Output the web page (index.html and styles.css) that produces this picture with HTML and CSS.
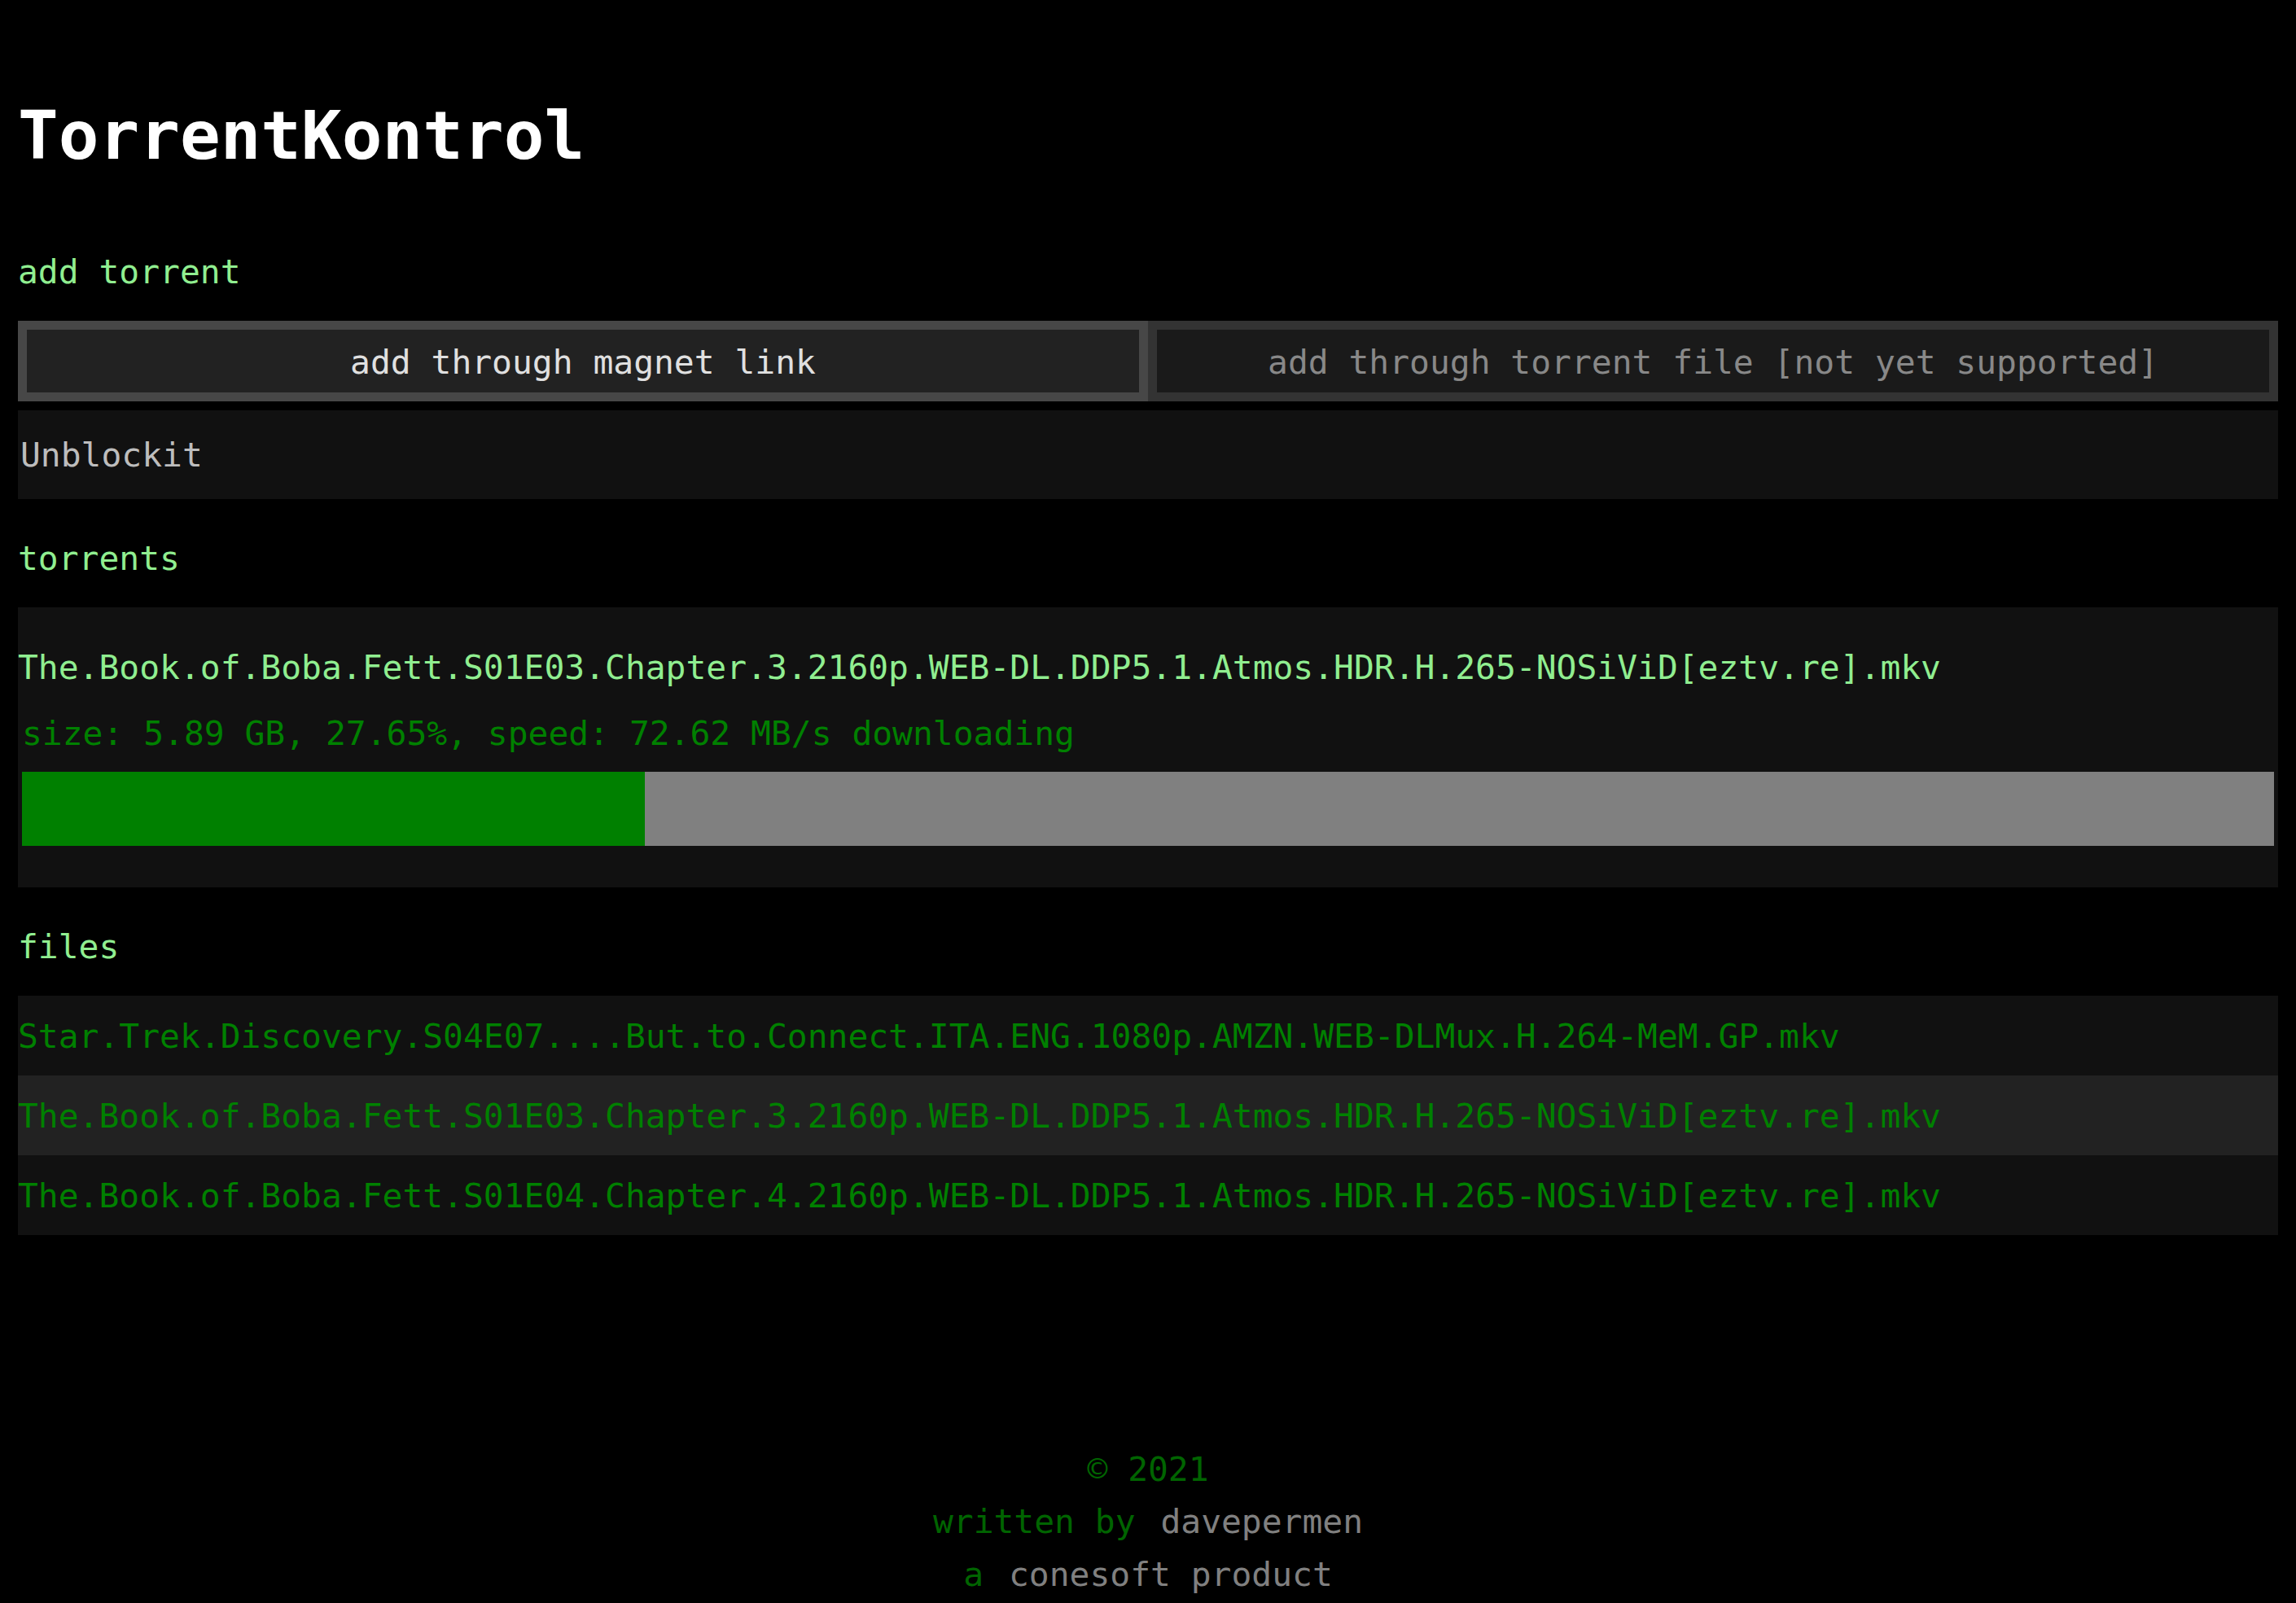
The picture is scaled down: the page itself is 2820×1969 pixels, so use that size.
FILE: index.html
```html
<!DOCTYPE html>
<html lang="en">
<head>
<meta charset="utf-8">
<title>TorrentKontrol</title>
<link rel="stylesheet" href="styles.css">
</head>
<body>
  <h1 class="title">TorrentKontrol</h1>

  <h2 class="label label-first">add torrent</h2>
  <div class="tabs">
    <button class="tab tab-active">add through magnet link</button>
    <button class="tab tab-inactive">add through torrent file [not yet supported]</button>
  </div>
  <div class="site-box">Unblockit</div>

  <h2 class="label">torrents</h2>
  <div class="torrent">
    <div class="torrent-name">The.Book.of.Boba.Fett.S01E03.Chapter.3.2160p.WEB-DL.DDP5.1.Atmos.HDR.H.265-NOSiViD[eztv.re].mkv</div>
    <div class="torrent-status">size: 5.89 GB, 27.65%, speed: 72.62 MB/s downloading</div>
    <div class="progress"><div class="progress-fill" style="width: 27.65%"></div></div>
  </div>

  <h2 class="label">files</h2>
  <ul class="files">
    <li class="file">Star.Trek.Discovery.S04E07....But.to.Connect.ITA.ENG.1080p.AMZN.WEB-DLMux.H.264-MeM.GP.mkv</li>
    <li class="file">The.Book.of.Boba.Fett.S01E03.Chapter.3.2160p.WEB-DL.DDP5.1.Atmos.HDR.H.265-NOSiViD[eztv.re].mkv</li>
    <li class="file">The.Book.of.Boba.Fett.S01E04.Chapter.4.2160p.WEB-DL.DDP5.1.Atmos.HDR.H.265-NOSiViD[eztv.re].mkv</li>
  </ul>

  <footer class="footer">
    <div class="footer-line">© 2021</div>
    <div class="footer-line">written by <a class="footer-link" href="#">davepermen</a></div>
    <div class="footer-line">a <a class="footer-link" href="#">conesoft product</a></div>
  </footer>
</body>
</html>
```
FILE: styles.css
```css
html, body {
  margin: 0;
  padding: 0;
  background: #000;
}

body {
  box-sizing: border-box;
  min-height: 100vh;
  padding: 0 22px;
  display: flex;
  flex-direction: column;
  font-family: "DejaVu Sans Mono", "Liberation Mono", monospace;
  font-size: 41.3px;
  color: #fff;
}

.title {
  margin: 116px 0 0;
  font-size: 82.6px;
  line-height: 100px;
  font-weight: bold;
  color: #fff;
}

.label {
  margin: 43px 0 30px;
  font-size: inherit;
  font-weight: normal;
  line-height: 60px;
  color: #90ee90;
}

.label-first {
  margin-top: 88px;
}

.tabs {
  display: flex;
}

.tab {
  flex: 1 1 0;
  margin: 0;
  padding: 3px 0 0;
  height: 99px;
  box-sizing: border-box;
  border: 11px solid #474747;
  background: #222;
  color: #e0e0e0;
  font: inherit;
  line-height: 74px;
  text-align: center;
  white-space: nowrap;
  -webkit-appearance: none;
  appearance: none;
  border-radius: 0;
}

.tab-inactive {
  border-color: #333;
  background: #1a1a1a;
  color: #888;
}

.site-box {
  margin-top: 11px;
  height: 109px;
  box-sizing: border-box;
  padding: 2px 0 0 3px;
  line-height: 107px;
  background: #111;
  color: #bdbdbd;
}

.torrent {
  background: #111;
  padding: 44px 5px 51px 0;
}

.torrent-name {
  line-height: 60px;
  color: #90ee90;
  white-space: nowrap;
}

.torrent-status {
  margin-top: 21px;
  padding-left: 5px;
  line-height: 60px;
  color: #008000;
  white-space: nowrap;
}

.progress {
  margin: 17px 0 0 5px;
  height: 91px;
  background: #808080;
}

.progress-fill {
  height: 100%;
  background: #008000;
}

.files {
  list-style: none;
  margin: 0;
  padding: 0;
}

.file {
  padding-top: 2px;
  line-height: 96px;
  background: #111;
  color: #008000;
  white-space: nowrap;
}

.file:nth-child(even) {
  background: #222;
}

.footer {
  margin-top: auto;
  padding-bottom: 3px;
  text-align: center;
  color: #006400;
}

.footer-line {
  line-height: 64.5px;
}

.footer-link {
  margin-left: 6px;
  color: #808080;
  text-decoration: none;
}
```
